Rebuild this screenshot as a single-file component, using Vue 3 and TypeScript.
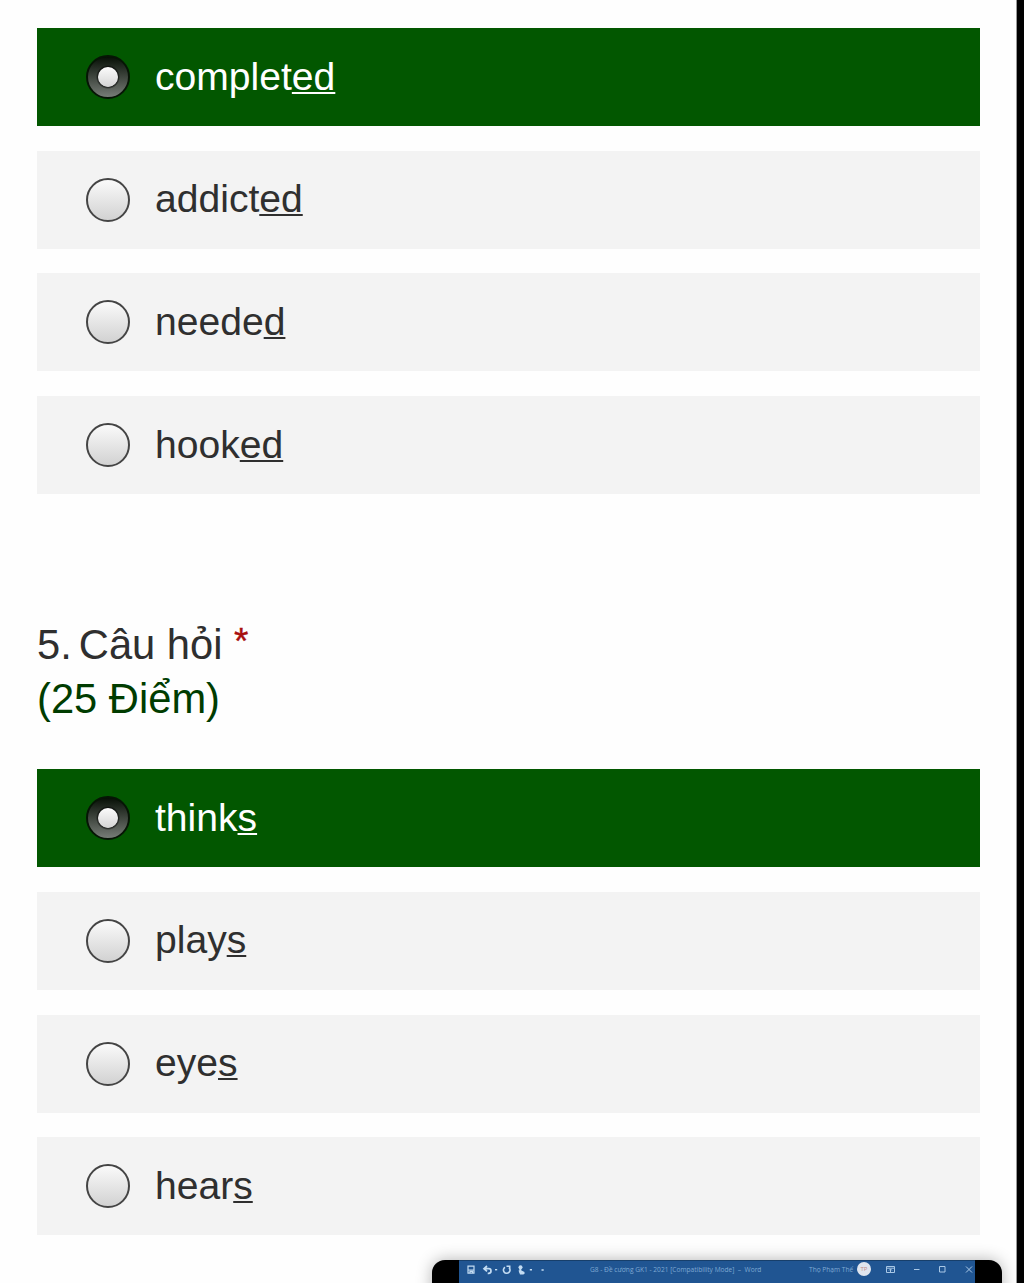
<script setup lang="ts">
interface Option {
  stem: string
  ending: string
  selected?: boolean
}

const questionFour: Option[] = [
  { stem: 'complet', ending: 'ed', selected: true },
  { stem: 'addict', ending: 'ed' },
  { stem: 'neede', ending: 'd' },
  { stem: 'hook', ending: 'ed' },
]

const questionFive: Option[] = [
  { stem: 'think', ending: 's', selected: true },
  { stem: 'play', ending: 's' },
  { stem: 'eye', ending: 's' },
  { stem: 'hear', ending: 's' },
]
</script>

<template>
  <div class="screen">
    <main class="form">
      <ul class="options">
        <li v-for="o in questionFour" :key="o.stem" class="option" :class="{ selected: o.selected }">
          <span class="radio"></span>
          <span class="label">{{ o.stem }}<u>{{ o.ending }}</u></span>
        </li>
      </ul>
      <header class="question">
        <div class="title"><span class="number">5.</span><span>Câu hỏi <span class="required">*</span></span></div>
        <div class="points">(25 Điểm)</div>
      </header>
      <ul class="options">
        <li v-for="o in questionFive" :key="o.stem" class="option" :class="{ selected: o.selected }">
          <span class="radio"></span>
          <span class="label">{{ o.stem }}<u>{{ o.ending }}</u></span>
        </li>
      </ul>
    </main>
    <aside class="edge"></aside>

    <div class="preview">
      <div class="titlebar">
        <svg class="tools" width="96" height="20" viewBox="0 1 96 20" fill="none" stroke="#c3dcf2" stroke-width="1.4">
          <path d="M9 6.200h6v7H9zM9 10h6M11 13v-1.600h2.500V13" stroke-width="1.200" />
          <path d="M28 6l-3 2.700 3 2.700M25.500 8.700h4.200a2.300 2.300 0 0 1 0 4.600h-1" stroke-width="1.700" />
          <path d="M36 9.700h2.200" />
          <path d="M46 7.200a3.300 3.300 0 1 0 4 .4M47.500 6.200h3.200v3" stroke-width="1.600" />
          <circle cx="61.500" cy="7.300" r="2" fill="#c3dcf2" stroke="none" />
          <path d="M61.300 8v4.500" stroke-width="2" />
          <path d="M59.500 10.500h3l3 1.500v1.300l-1 1.200h-3.500z" fill="#c3dcf2" stroke="none" />
          <path d="M70.800 9.700h2.200M82.500 10h2.200" />
        </svg>
        <span class="document">G8 - Đề cương GK1 - 2021 [Compatibility Mode]&nbsp; –&nbsp; Word</span>
        <span class="user">Thọ Phạm Thế</span>
        <span class="avatar">TP</span>
        <svg class="controls" width="104" height="20" viewBox="0 1 104 20" fill="none" stroke="#a9c8e6" stroke-width="1">
          <path d="M15.500 6.500h8v6h-8zM15.500 8.200h8M19.500 12V9.200M18 10.500l1.500-1.500 1.500 1.500" />
          <path d="M43 9.500h5.500" />
          <path d="M68.500 6.500h5.500v5.500h-5.500z" />
          <path d="M95 6.500l6 6M101 6.500l-6 6" />
        </svg>
      </div>
    </div>
  </div>
</template>

<style>
body {
  margin: 0;
  background: #fefefe;
}
</style>

<style scoped>
.screen {
  position: relative;
  display: flex;
  width: 1024px;
  height: 1283px;
  overflow: hidden;
  background: #fefefe;
  color: #2f2f2f;
  font-family: "Liberation Sans", Arial, sans-serif;
}
.form {
  flex: 1;
  padding: 28px 37px 0;
}
.edge {
  width: 7px;
  background: #000;
  box-shadow: -1px 0 0 #999;
}
.options {
  display: flex;
  flex-direction: column;
  gap: 24.700px;
  margin: 0;
  padding: 0;
  list-style: none;
}
.option {
  display: flex;
  align-items: center;
  box-sizing: border-box;
  height: 98px;
  padding-left: 49px;
  gap: 25px;
  background: #f3f3f3;
}
.option.selected {
  background: #025700;
  color: #fff;
}
.radio {
  box-sizing: border-box;
  width: 44px;
  height: 44px;
  border: 2px solid #444;
  border-radius: 50%;
  background: linear-gradient(#fcfcfc, #d0d0d0) border-box;
}
.selected .radio {
  border-color: #061505;
  background:
    radial-gradient(circle at 50% 50%, transparent 9.500px, rgba(0, 0, 0, 0.7) 10px, transparent 12px),
    linear-gradient(#071006, #777c77);
  display: grid;
  place-items: center;
}
.selected .radio::after {
  content: "";
  width: 20px;
  height: 20px;
  border-radius: 50%;
  background: linear-gradient(#fbfbfb, #d5d5d5);
}
.label {
  font-size: 39.100px;
  line-height: 46px;
  padding-bottom: 1px;
  white-space: nowrap;
}
.label u {
  text-decoration-thickness: 2px;
  text-underline-offset: 2px;
  text-decoration-skip-ink: none;
}
.question {
  box-sizing: border-box;
  height: 152px;
  margin: 123.100px 0 0;
  padding-top: 0.600px;
  font-size: 41.700px;
  line-height: 54px;
}
.title {
  display: flex;
  height: 54px;
  gap: 7px;
}
.required {
  color: #a80f0f;
  font-size: 37px;
  line-height: 1;
  vertical-align: 5px;
  -webkit-text-stroke: 0.4px #a80f0f;
}
.points {
  color: #003c00;
}
.preview {
  position: absolute;
  left: 432px;
  top: 1260px;
  box-sizing: border-box;
  width: 570px;
  height: 40px;
  padding: 0 27px;
  border-radius: 13px 13px 0 0;
  background: #000;
  box-shadow: 0 0 16px rgba(0, 0, 0, 0.3);
}
.titlebar {
  display: flex;
  height: 40px;
  background: #205592;
  border-top: 1px solid #173f6b;
  box-sizing: border-box;
  color: #7fa9d3;
  font: 6.600px/17px "Open Sans", "Noto Sans", sans-serif;
  white-space: nowrap;
}
.tools {
  flex: none;
  width: 96px;
}
.document {
  width: 219px;
  padding-left: 35px;
}
.user {
  width: 48px;
}
.avatar {
  width: 14px;
  height: 14px;
  margin-top: 1px;
  border-radius: 50%;
  background: #dfe5ee;
  color: #c18c88;
  font-size: 6px;
  line-height: 14px;
  text-align: center;
}
.controls {
  flex: none;
}
</style>
